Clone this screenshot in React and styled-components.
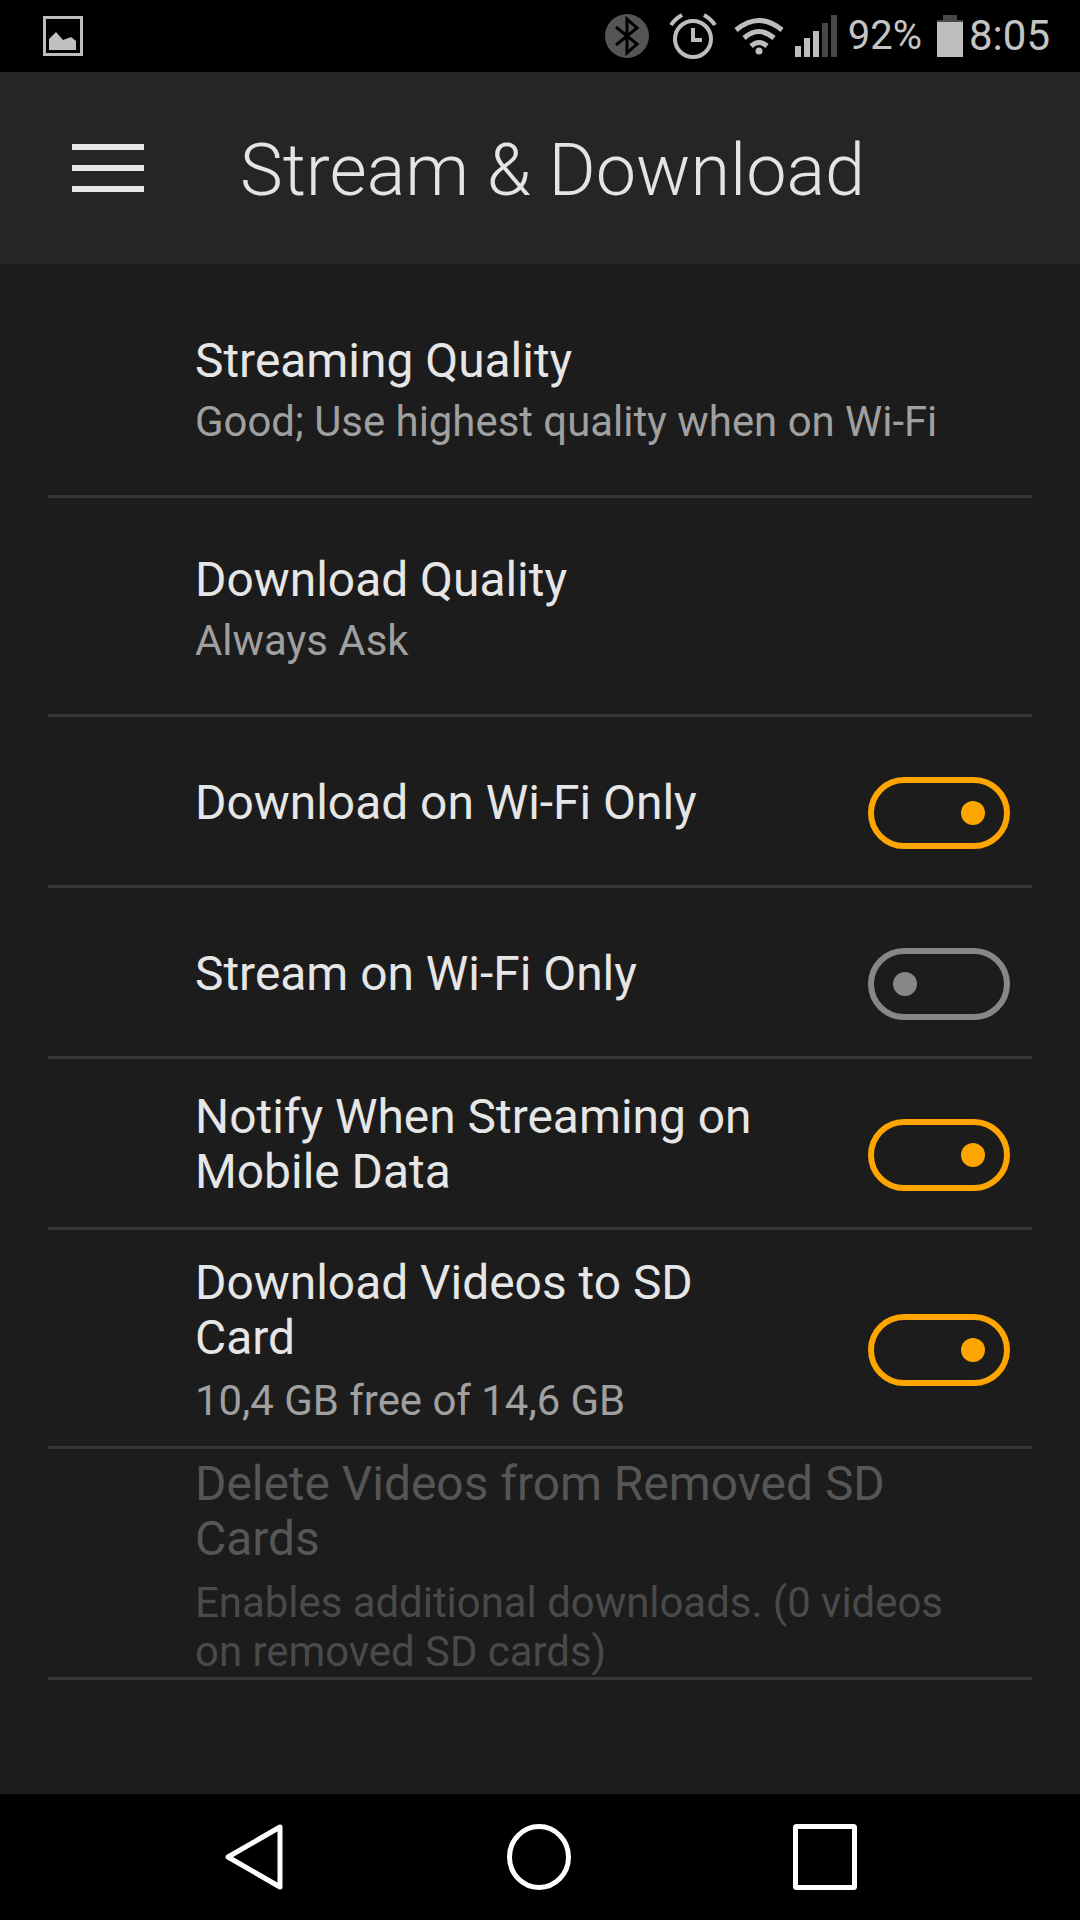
import styled, { createGlobalStyle } from "styled-components";

const Global = createGlobalStyle`
  html, body { margin: 0; padding: 0; background: #1c1c1c; }
  body { font-family: Roboto, "Liberation Sans", sans-serif; }
`

const Screen = styled.div`
  width: 1080px;
  height: 1920px;
  display: flex;
  flex-direction: column;
  background: #1c1c1c;
  overflow: hidden;
`

const StatusBar = styled.div`
  height: 72px;
  flex: none;
  background: #000;
  display: flex;
  align-items: center;
  padding: 0 30px 0 43px;
`

const StatusRight = styled.div`
  margin-left: auto;
  display: flex;
  align-items: center;
  height: 72px;
`

const StatusIcon = styled.svg`
  flex: none;
  margin-left: ${props => props.$left || 0}px;
`

const StatusText = styled.span`
  font-size: ${props => props.$size}px;
  line-height: 72px;
  color: #c4c4c4;
  margin-left: ${props => props.$left}px;
`

const Toolbar = styled.div`
  height: 192px;
  flex: none;
  background: #252525;
  display: flex;
  align-items: center;
  padding-left: 72px;
`

const Burger = styled.div`
  width: 72px;
  height: 48px;
  display: flex;
  flex-direction: column;
  justify-content: space-between;
  margin-right: 96px;
  & > span {
    height: 6px;
    background: #e6e6e6;
  }
`

const Title = styled.h1`
  margin: 6px 0 0;
  font-size: 72px;
  font-weight: 300;
  color: #e4e4e4;
  line-height: 80px;
`

const List = styled.div`
  flex: 1;
  padding: 0 48px;
`

const Row = styled.div`
  height: ${props => props.$height}px;
  box-sizing: border-box;
  border-bottom: 3px solid #363636;
  padding: 0 22px 0 147px;
  display: flex;
  justify-content: space-between;
`

const RowText = styled.div`
  width: ${props => props.$wide ? "780px" : "580px"};
  padding-top: ${props => props.$top}px;
`

const Label = styled.div`
  font-size: 47.9px;
  line-height: 55px;
  color: ${props => props.$off ? "#565656" : "#e6e6e6"};
`

const Sub = styled.div`
  font-size: 41.9px;
  line-height: 49px;
  margin-top: ${props => props.$gap}px;
  color: ${props => props.$off ? "#4a4a4a" : "#a0a0a0"};
`

const Toggle = styled.div`
  width: 142px;
  height: 72px;
  box-sizing: border-box;
  flex: none;
  margin-top: ${props => props.$top}px;
  border: 6px solid ${props => props.$on ? "#ffa500" : "#878787"};
  border-radius: 36px;
  display: flex;
  align-items: center;
  justify-content: ${props => props.$on ? "flex-end" : "flex-start"};
  padding: 0 19px;
  &::after {
    content: "";
    width: 24px;
    height: 24px;
    border-radius: 50%;
    background: ${props => props.$on ? "#ffa500" : "#878787"};
  }
`

const NavBar = styled.div`
  height: 126px;
  flex: none;
  background: #000;
  display: flex;
  align-items: center;
  padding-left: 225px;
`

const NavIcon = styled.svg`
  flex: none;
  margin-right: ${props => props.$right || 0}px;
`

function Bluetooth() {
  return (
    <StatusIcon width="44" height="44" viewBox="0 0 44 44">
      <circle cx="22" cy="22" r="22" fill="#555" />
      <path d="M11 13 L32 30 L22 39 V5 L32 14 L11 31" fill="none" stroke="#000" strokeWidth="3" />
    </StatusIcon>
  )
}

function Alarm() {
  return (
    <StatusIcon $left={20} width="48" height="46" viewBox="0 0 48 46">
      <circle cx="24" cy="26" r="18" fill="none" stroke="#bdbdbd" strokeWidth="4" />
      <path d="M24 15 V27 H33" fill="none" stroke="#bdbdbd" strokeWidth="4" />
      <path d="M2 12 Q6 6 13 2 M46 12 Q42 6 35 2" fill="none" stroke="#bdbdbd" strokeWidth="4" />
    </StatusIcon>
  )
}

function Wifi() {
  return (
    <StatusIcon $left={17} width="50" height="38" viewBox="0 0 50 38">
      <path d="M2 13 Q25 -6 48 13" fill="none" stroke="#bdbdbd" strokeWidth="5" />
      <path d="M10 21 Q25 8 40 21" fill="none" stroke="#bdbdbd" strokeWidth="5" />
      <path d="M17 29 Q25 22 33 29" fill="none" stroke="#bdbdbd" strokeWidth="5" />
      <circle cx="25" cy="34" r="3.5" fill="#bdbdbd" />
    </StatusIcon>
  )
}

function Signal() {
  return (
    <StatusIcon $left={11} width="42" height="42" viewBox="0 0 42 42">
      <rect x="0" y="31" width="6" height="11" fill="#bdbdbd" />
      <rect x="9" y="23" width="6" height="19" fill="#bdbdbd" />
      <rect x="18" y="16" width="6" height="26" fill="#bdbdbd" />
      <rect x="27" y="8" width="6" height="34" fill="#484848" />
      <rect x="36" y="0" width="6" height="42" fill="#484848" />
    </StatusIcon>
  )
}

function Battery() {
  return (
    <StatusIcon $left={15} width="26" height="42" viewBox="0 0 26 42">
      <rect x="6" y="0" width="14" height="6" fill="#484848" />
      <rect x="0" y="5" width="26" height="2" fill="#484848" />
      <rect x="0" y="7" width="26" height="35" fill="#bdbdbd" />
    </StatusIcon>
  )
}

export default function App() {
  return (
    <>
      <Global />
      <Screen>
        <StatusBar>
          <StatusIcon width="40" height="40" viewBox="0 0 40 40">
            <rect x="1.5" y="1.5" width="37" height="37" fill="none" stroke="#bdbdbd" strokeWidth="3" />
            <path d="M6 34 V23 L13 16 L20 24 L28 21 L33 25 V34 Z" fill="#c0c0c0" />
          </StatusIcon>
          <StatusRight>
            <Bluetooth />
            <Alarm />
            <Wifi />
            <Signal />
            <StatusText $size={40} $left={11}>92%</StatusText>
            <Battery />
            <StatusText $size={42} $left={6}>8:05</StatusText>
          </StatusRight>
        </StatusBar>
        <Toolbar>
          <Burger><span /><span /><span /></Burger>
          <Title>Stream &amp; Download</Title>
        </Toolbar>
        <List>
          <Row $height={234}>
            <RowText $wide $top={70}>
              <Label>Streaming Quality</Label>
              <Sub $gap={8}>Good; Use highest quality when on Wi-Fi</Sub>
            </RowText>
          </Row>
          <Row $height={219}>
            <RowText $wide $top={55}>
              <Label>Download Quality</Label>
              <Sub $gap={8}>Always Ask</Sub>
            </RowText>
          </Row>
          <Row $height={171}>
            <RowText $top={59}><Label>Download on Wi-Fi Only</Label></RowText>
            <Toggle $on $top={60} />
          </Row>
          <Row $height={171}>
            <RowText $top={59}><Label>Stream on Wi-Fi Only</Label></RowText>
            <Toggle $top={60} />
          </Row>
          <Row $height={171}>
            <RowText $top={31}><Label>Notify When Streaming on Mobile Data</Label></RowText>
            <Toggle $on $top={60} />
          </Row>
          <Row $height={219}>
            <RowText $top={26}>
              <Label>Download Videos to SD Card</Label>
              <Sub $gap={10}>10,4 GB free of 14,6 GB</Sub>
            </RowText>
            <Toggle $on $top={84} />
          </Row>
          <Row $height={231}>
            <RowText $wide $top={8}>
              <Label $off>Delete Videos from Removed SD Cards</Label>
              <Sub $off $gap={11}>Enables additional downloads. (0 videos on removed SD cards)</Sub>
            </RowText>
          </Row>
        </List>
        <NavBar>
          <NavIcon $right={224} width="58" height="66" viewBox="0 0 58 66">
            <path d="M3 33 L55 3 V63 Z" fill="none" stroke="#fff" strokeWidth="5" strokeLinejoin="round" />
          </NavIcon>
          <NavIcon $right={222} width="64" height="66" viewBox="0 0 64 66">
            <ellipse cx="32" cy="33" rx="29.5" ry="30.5" fill="none" stroke="#fff" strokeWidth="5" />
          </NavIcon>
          <NavIcon width="64" height="66" viewBox="0 0 64 66">
            <rect x="2.5" y="2.5" width="59" height="61" rx="1" fill="none" stroke="#fff" strokeWidth="5" />
          </NavIcon>
        </NavBar>
      </Screen>
    </>
  )
}
